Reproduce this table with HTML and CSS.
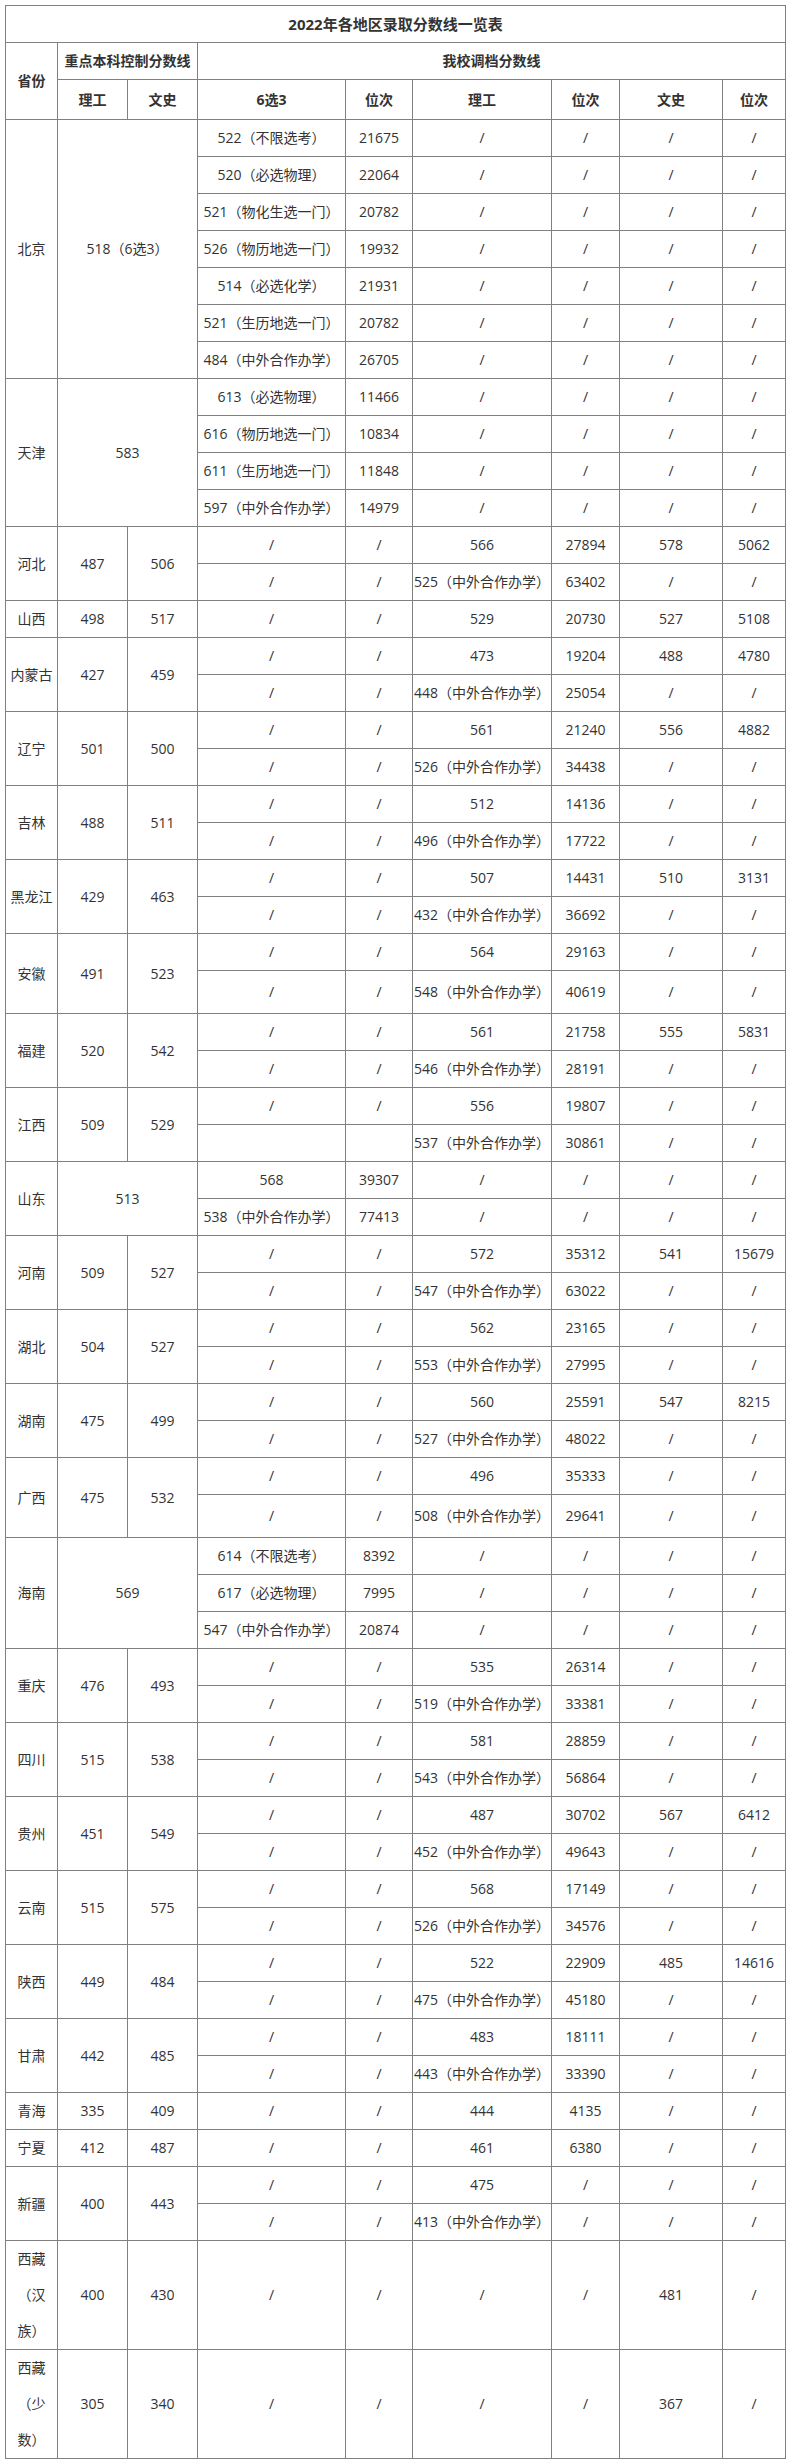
FILE: index.html
```html
<!DOCTYPE html>
<html lang="zh-CN">
<head>
<meta charset="utf-8">
<title>2022年各地区录取分数线一览表</title>
<link rel="stylesheet" href="styles.css">
</head>
<body>
<div class="page">
<table class="scores">
<colgroup>
<col class="c-prov"><col class="c-lg"><col class="c-ws"><col class="c-x3"><col class="c-wc1"><col class="c-lg2"><col class="c-wc2"><col class="c-ws2"><col class="c-wc3">
</colgroup>
<tr class="title-row"><th colspan="9" class="title">2022年各地区录取分数线一览表</th></tr>
<tr><th rowspan="2">省份</th><th colspan="2">重点本科控制分数线</th><th colspan="6">我校调档分数线</th></tr>
<tr class="sub-head"><th>理工</th><th>文史</th><th>6选3</th><th>位次</th><th>理工</th><th>位次</th><th>文史</th><th>位次</th></tr>

<tr><td rowspan="7">北京</td><td colspan="2" rowspan="7">518（6选3）</td><td>522（不限选考）</td><td>21675</td><td>/</td><td>/</td><td>/</td><td>/</td></tr>
<tr><td>520（必选物理）</td><td>22064</td><td>/</td><td>/</td><td>/</td><td>/</td></tr>
<tr><td>521（物化生选一门）</td><td>20782</td><td>/</td><td>/</td><td>/</td><td>/</td></tr>
<tr><td>526（物历地选一门）</td><td>19932</td><td>/</td><td>/</td><td>/</td><td>/</td></tr>
<tr><td>514（必选化学）</td><td>21931</td><td>/</td><td>/</td><td>/</td><td>/</td></tr>
<tr><td>521（生历地选一门）</td><td>20782</td><td>/</td><td>/</td><td>/</td><td>/</td></tr>
<tr><td>484（中外合作办学）</td><td>26705</td><td>/</td><td>/</td><td>/</td><td>/</td></tr>

<tr><td rowspan="4">天津</td><td colspan="2" rowspan="4">583</td><td>613（必选物理）</td><td>11466</td><td>/</td><td>/</td><td>/</td><td>/</td></tr>
<tr><td>616（物历地选一门）</td><td>10834</td><td>/</td><td>/</td><td>/</td><td>/</td></tr>
<tr><td>611（生历地选一门）</td><td>11848</td><td>/</td><td>/</td><td>/</td><td>/</td></tr>
<tr><td>597（中外合作办学）</td><td>14979</td><td>/</td><td>/</td><td>/</td><td>/</td></tr>

<tr><td rowspan="2">河北</td><td rowspan="2">487</td><td rowspan="2">506</td><td>/</td><td>/</td><td>566</td><td>27894</td><td>578</td><td>5062</td></tr>
<tr><td>/</td><td>/</td><td>525（中外合作办学）</td><td>63402</td><td>/</td><td>/</td></tr>

<tr><td>山西</td><td>498</td><td>517</td><td>/</td><td>/</td><td>529</td><td>20730</td><td>527</td><td>5108</td></tr>

<tr><td rowspan="2">内蒙古</td><td rowspan="2">427</td><td rowspan="2">459</td><td>/</td><td>/</td><td>473</td><td>19204</td><td>488</td><td>4780</td></tr>
<tr><td>/</td><td>/</td><td>448（中外合作办学）</td><td>25054</td><td>/</td><td>/</td></tr>

<tr><td rowspan="2">辽宁</td><td rowspan="2">501</td><td rowspan="2">500</td><td>/</td><td>/</td><td>561</td><td>21240</td><td>556</td><td>4882</td></tr>
<tr><td>/</td><td>/</td><td>526（中外合作办学）</td><td>34438</td><td>/</td><td>/</td></tr>

<tr><td rowspan="2">吉林</td><td rowspan="2">488</td><td rowspan="2">511</td><td>/</td><td>/</td><td>512</td><td>14136</td><td>/</td><td>/</td></tr>
<tr><td>/</td><td>/</td><td>496（中外合作办学）</td><td>17722</td><td>/</td><td>/</td></tr>

<tr><td rowspan="2">黑龙江</td><td rowspan="2">429</td><td rowspan="2">463</td><td>/</td><td>/</td><td>507</td><td>14431</td><td>510</td><td>3131</td></tr>
<tr><td>/</td><td>/</td><td>432（中外合作办学）</td><td>36692</td><td>/</td><td>/</td></tr>

<tr><td rowspan="2">安徽</td><td rowspan="2">491</td><td rowspan="2">523</td><td>/</td><td>/</td><td>564</td><td>29163</td><td>/</td><td>/</td></tr>
<tr class="tall"><td>/</td><td>/</td><td>548（中外合作办学）</td><td>40619</td><td>/</td><td>/</td></tr>

<tr><td rowspan="2">福建</td><td rowspan="2">520</td><td rowspan="2">542</td><td>/</td><td>/</td><td>561</td><td>21758</td><td>555</td><td>5831</td></tr>
<tr><td>/</td><td>/</td><td>546（中外合作办学）</td><td>28191</td><td>/</td><td>/</td></tr>

<tr><td rowspan="2">江西</td><td rowspan="2">509</td><td rowspan="2">529</td><td>/</td><td>/</td><td>556</td><td>19807</td><td>/</td><td>/</td></tr>
<tr><td></td><td></td><td>537（中外合作办学）</td><td>30861</td><td>/</td><td>/</td></tr>

<tr><td rowspan="2">山东</td><td colspan="2" rowspan="2">513</td><td>568</td><td>39307</td><td>/</td><td>/</td><td>/</td><td>/</td></tr>
<tr><td>538（中外合作办学）</td><td>77413</td><td>/</td><td>/</td><td>/</td><td>/</td></tr>

<tr><td rowspan="2">河南</td><td rowspan="2">509</td><td rowspan="2">527</td><td>/</td><td>/</td><td>572</td><td>35312</td><td>541</td><td>15679</td></tr>
<tr><td>/</td><td>/</td><td>547（中外合作办学）</td><td>63022</td><td>/</td><td>/</td></tr>

<tr><td rowspan="2">湖北</td><td rowspan="2">504</td><td rowspan="2">527</td><td>/</td><td>/</td><td>562</td><td>23165</td><td>/</td><td>/</td></tr>
<tr><td>/</td><td>/</td><td>553（中外合作办学）</td><td>27995</td><td>/</td><td>/</td></tr>

<tr><td rowspan="2">湖南</td><td rowspan="2">475</td><td rowspan="2">499</td><td>/</td><td>/</td><td>560</td><td>25591</td><td>547</td><td>8215</td></tr>
<tr><td>/</td><td>/</td><td>527（中外合作办学）</td><td>48022</td><td>/</td><td>/</td></tr>

<tr><td rowspan="2">广西</td><td rowspan="2">475</td><td rowspan="2">532</td><td>/</td><td>/</td><td>496</td><td>35333</td><td>/</td><td>/</td></tr>
<tr class="tall"><td>/</td><td>/</td><td>508（中外合作办学）</td><td>29641</td><td>/</td><td>/</td></tr>

<tr><td rowspan="3">海南</td><td colspan="2" rowspan="3">569</td><td>614（不限选考）</td><td>8392</td><td>/</td><td>/</td><td>/</td><td>/</td></tr>
<tr><td>617（必选物理）</td><td>7995</td><td>/</td><td>/</td><td>/</td><td>/</td></tr>
<tr><td>547（中外合作办学）</td><td>20874</td><td>/</td><td>/</td><td>/</td><td>/</td></tr>

<tr><td rowspan="2">重庆</td><td rowspan="2">476</td><td rowspan="2">493</td><td>/</td><td>/</td><td>535</td><td>26314</td><td>/</td><td>/</td></tr>
<tr><td>/</td><td>/</td><td>519（中外合作办学）</td><td>33381</td><td>/</td><td>/</td></tr>

<tr><td rowspan="2">四川</td><td rowspan="2">515</td><td rowspan="2">538</td><td>/</td><td>/</td><td>581</td><td>28859</td><td>/</td><td>/</td></tr>
<tr><td>/</td><td>/</td><td>543（中外合作办学）</td><td>56864</td><td>/</td><td>/</td></tr>

<tr><td rowspan="2">贵州</td><td rowspan="2">451</td><td rowspan="2">549</td><td>/</td><td>/</td><td>487</td><td>30702</td><td>567</td><td>6412</td></tr>
<tr><td>/</td><td>/</td><td>452（中外合作办学）</td><td>49643</td><td>/</td><td>/</td></tr>

<tr><td rowspan="2">云南</td><td rowspan="2">515</td><td rowspan="2">575</td><td>/</td><td>/</td><td>568</td><td>17149</td><td>/</td><td>/</td></tr>
<tr><td>/</td><td>/</td><td>526（中外合作办学）</td><td>34576</td><td>/</td><td>/</td></tr>

<tr><td rowspan="2">陕西</td><td rowspan="2">449</td><td rowspan="2">484</td><td>/</td><td>/</td><td>522</td><td>22909</td><td>485</td><td>14616</td></tr>
<tr><td>/</td><td>/</td><td>475（中外合作办学）</td><td>45180</td><td>/</td><td>/</td></tr>

<tr><td rowspan="2">甘肃</td><td rowspan="2">442</td><td rowspan="2">485</td><td>/</td><td>/</td><td>483</td><td>18111</td><td>/</td><td>/</td></tr>
<tr><td>/</td><td>/</td><td>443（中外合作办学）</td><td>33390</td><td>/</td><td>/</td></tr>

<tr><td>青海</td><td>335</td><td>409</td><td>/</td><td>/</td><td>444</td><td>4135</td><td>/</td><td>/</td></tr>
<tr><td>宁夏</td><td>412</td><td>487</td><td>/</td><td>/</td><td>461</td><td>6380</td><td>/</td><td>/</td></tr>

<tr><td rowspan="2">新疆</td><td rowspan="2">400</td><td rowspan="2">443</td><td>/</td><td>/</td><td>475</td><td>/</td><td>/</td><td>/</td></tr>
<tr><td>/</td><td>/</td><td>413（中外合作办学）</td><td>/</td><td>/</td><td>/</td></tr>

<tr class="xz"><td class="wrap">西藏（汉族）</td><td>400</td><td>430</td><td>/</td><td>/</td><td>/</td><td>/</td><td>481</td><td>/</td></tr>
<tr class="xz"><td class="wrap">西藏（少数）</td><td>305</td><td>340</td><td>/</td><td>/</td><td>/</td><td>/</td><td>367</td><td>/</td></tr>
</table>
</div>
</body>
</html>
```

FILE: styles.css
```css
html, body {
  margin: 0;
  padding: 0;
  background: #ffffff;
}

.page {
  padding: 5px 0 5px 5px;
}

.scores {
  border-collapse: collapse;
  table-layout: fixed;
  width: 780px;
  font-family: "Open Sans", "Noto Sans CJK SC", sans-serif;
  font-size: 14px;
  color: #333333;
}

.c-prov { width: 52px; }
.c-lg { width: 70px; }
.c-ws { width: 70px; }
.c-x3 { width: 148px; }
.c-wc1 { width: 67px; }
.c-lg2 { width: 139px; }
.c-wc2 { width: 68px; }
.c-ws2 { width: 103px; }
.c-wc3 { width: 63px; }

.scores th,
.scores td {
  border: 1px solid #808080;
  padding: 0 1px;
  height: 36px;
  line-height: 36px;
  text-align: center;
  vertical-align: middle;
  white-space: nowrap;
  overflow: visible;
}

.scores th {
  font-weight: bold;
}

.scores .title {
  font-size: 15px;
}

.sub-head th {
  height: 39px;
  line-height: 39px;
}

.tall td {
  height: 42px;
  line-height: 42px;
}

.xz td {
  height: 108px;
}

.scores td.wrap {
  white-space: normal;
  line-height: 36px;
  padding: 0 4px;
}
```
